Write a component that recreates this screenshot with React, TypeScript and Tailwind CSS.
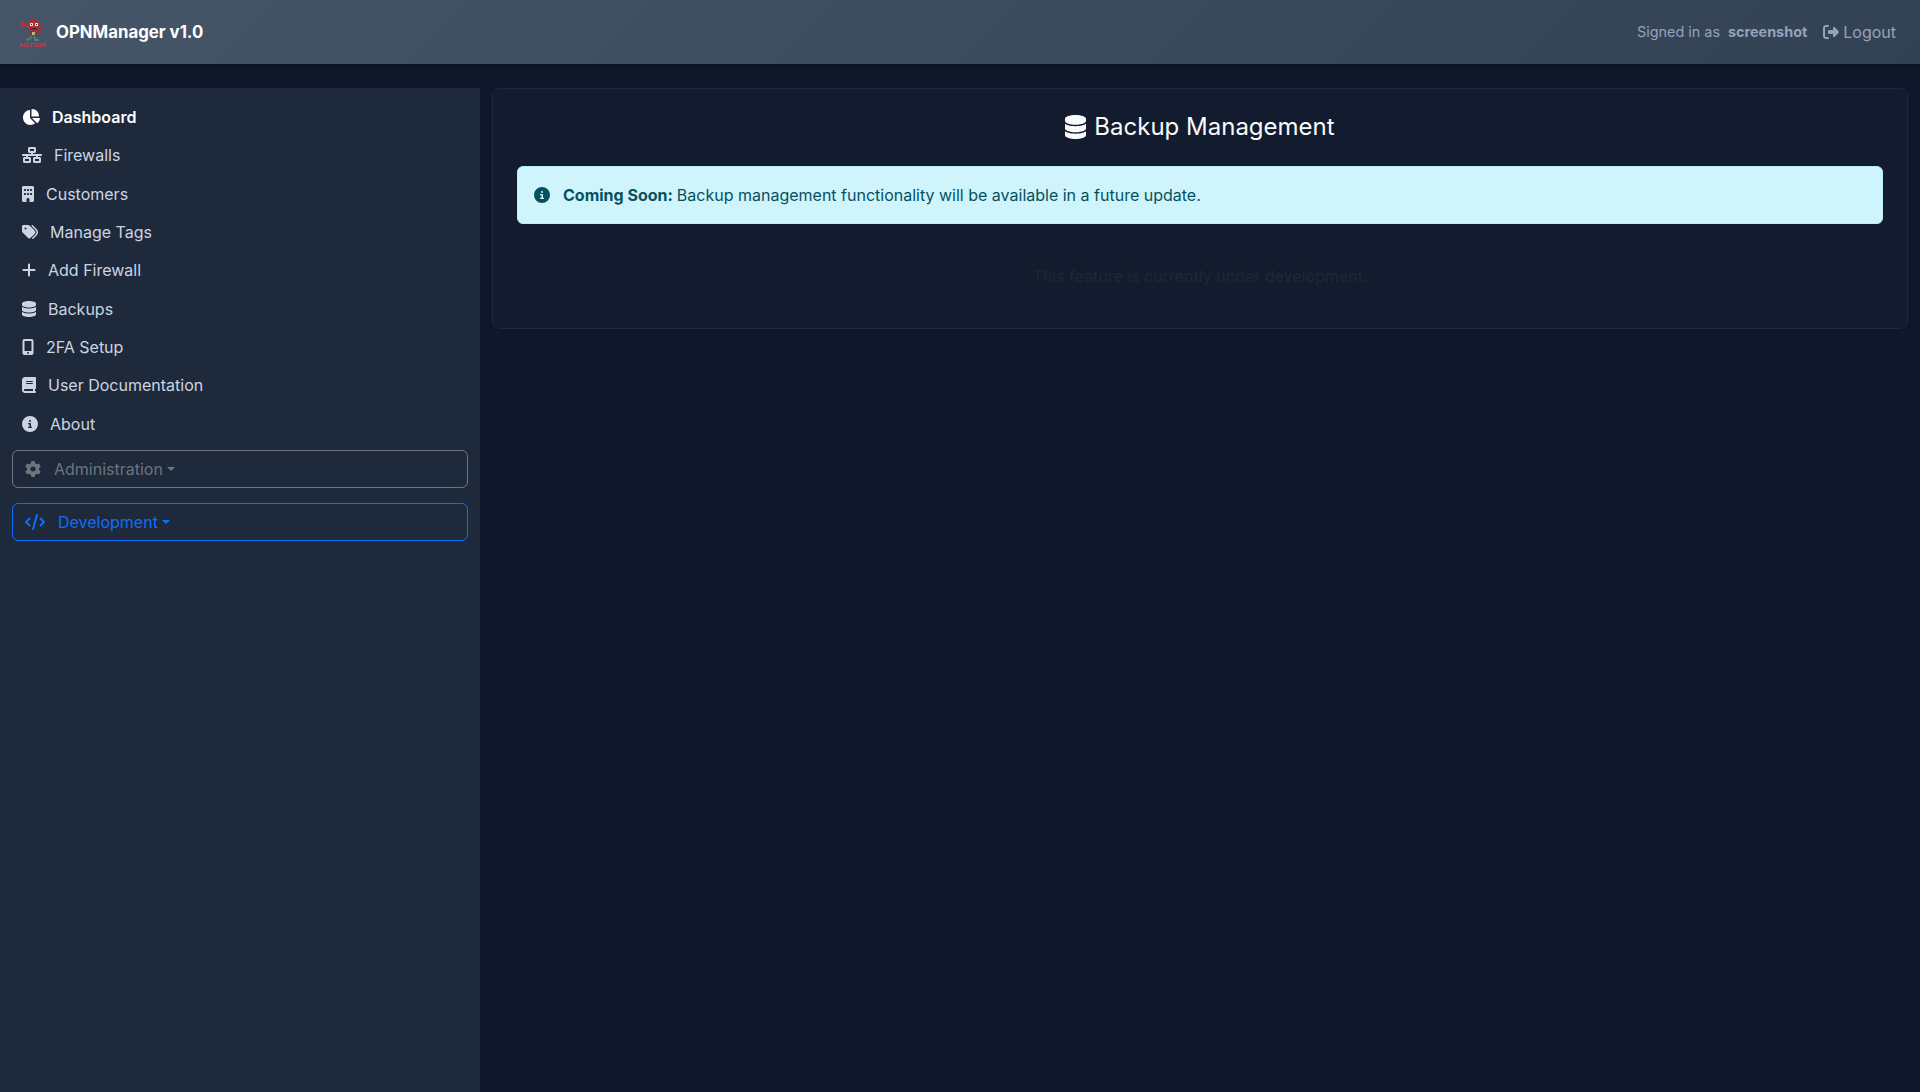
import React from "react";
import {
  FaChartPie, FaNetworkWired, FaBuilding, FaTags, FaPlus, FaDatabase, FaMobileScreenButton,
  FaBook, FaCircleInfo, FaGear, FaCode, FaRightFromBracket,
} from "react-icons/fa6";

const items = [
  { label: "Dashboard", icon: <FaChartPie className="h-[16px] w-[18px] shrink-0" />, active: true },
  { label: "Firewalls", icon: <FaNetworkWired className="h-[16px] w-[20px] shrink-0" /> },
  { label: "Customers", icon: <FaBuilding className="h-[16px] w-[12px] shrink-0" /> },
  { label: "Manage Tags", icon: <FaTags className="h-[16px] w-[16px] shrink-0" /> },
  { label: "Add Firewall", icon: <FaPlus className="h-[16px] w-[14px] shrink-0" /> },
  { label: "Backups", icon: <FaDatabase className="h-[16px] w-[14px] shrink-0" /> },
  { label: "2FA Setup", icon: <FaMobileScreenButton className="h-[16px] w-[12px] shrink-0" /> },
  { label: "User Documentation", icon: <FaBook className="h-[16px] w-[14px] shrink-0" /> },
  { label: "About", icon: <FaCircleInfo className="h-[16px] w-[16px] shrink-0" /> },
];

function Logo() {
  return (
    <div className="flex h-[32px] w-[24px] flex-col items-center">
      <svg width="24" height="26" viewBox="0 0 24 26" className="block" aria-hidden="true">
        <path d="M13 1l1 3 2-1-1 3h-4l-2-3 3 1z" fill="#b3262e" />
        <circle cx="14" cy="10" r="5.5" fill="#b82a33" />
        <path d="M9 11L3 8 1 6M3 8l-1 3" stroke="#c92a35" strokeWidth="2" fill="none" />
        <path d="M18 12l3 1 0 4" stroke="#b3262e" strokeWidth="2" fill="none" />
        <rect x="10" y="7" width="3" height="3" fill="#e0ddc8" />
        <rect x="15" y="7" width="3" height="3" fill="#e0ddc8" />
        <rect x="11" y="8" width="1" height="1" fill="#222" />
        <rect x="16" y="8" width="1" height="1" fill="#222" />
        <rect x="11" y="12" width="6" height="1.5" fill="#3a2e26" />
        <rect x="10" y="15" width="7" height="5" fill="#7d3a36" />
        <rect x="12" y="16" width="3" height="3" fill="#c9b48a" />
        <path d="M11 20l-2 2-3 1 1 2 4-2 1-3z" fill="#4d8a62" />
        <path d="M15 20l1 3 3 0 0 2-4 0-2-5z" fill="#4d8a62" />
      </svg>
      <span className="font-['Liberation_Sans',sans-serif] text-[6px] leading-[6px] font-bold whitespace-nowrap text-[#d7333f]">AGITSDR</span>
    </div>
  );
}

function Caret() {
  return <span className="ml-[4px] inline-block h-0 w-0 border-x-[4.8px] border-t-[4.8px] border-x-transparent border-t-current" />;
}

export default function App() {
  return (
    <div className="flex min-h-[1092px] flex-col bg-[#0f172a] font-['Inter',sans-serif] text-[16px] leading-6 text-[#f1f5f9]">
      <header className="flex h-[64px] items-center justify-between bg-linear-[135deg] from-[#475569] to-[#334155] pr-[24px] pl-[20px] shadow-[0_1px_3px_rgba(0,0,0,0.3)]">
        <div className="flex items-center gap-[12px]">
          <Logo />
          <span className="text-[16.8px] font-bold text-white">OPNManager v1.0</span>
        </div>
        <div className="flex items-center text-[14.4px] text-[#94a3b8]">
          <span>Signed in as</span>
          <span className="ml-[8px] font-bold">screenshot</span>
          <span className="ml-[16px] flex items-center gap-[4px] text-[16px]">
            <FaRightFromBracket className="text-[16px]" />
            Logout
          </span>
        </div>
      </header>

      <div className="mt-[24px] flex flex-1">
        <aside className="flex w-[480px] shrink-0 flex-col bg-[#1e293b] px-[12px] pt-[9.6px]">
          <nav className="flex flex-col">
            {items.map(({ label, icon, active }) => (
              <a
                key={label}
                className={`flex items-center gap-[12px] px-[10px] py-[7.2px] ${active ? "font-semibold text-white" : "text-[#cbd5e1]"}`}
              >
                {icon}
                {label}
              </a>
            ))}
          </nav>
          <button className="mt-[7px] flex h-[38px] items-center rounded-[6px] border border-[#6c757d] px-[12px] text-[#6c757d]">
            <FaGear className="mr-[13px] h-[16px] w-[16px]" />
            Administration
            <Caret />
          </button>
          <button className="mt-[15px] flex h-[38px] items-center rounded-[6px] border border-[#0d6efd] px-[12px] text-[#0d6efd]">
            <FaCode className="mr-[13px] h-[16px] w-[20px]" />
            Development
            <Caret />
          </button>
        </aside>

        <main className="flex-1 pt-0 pr-[12px] pl-[12px]">
          <section className="flex h-[241px] flex-col rounded-[8px] border border-[#1e293b] bg-[#131c2e] px-[24px] pt-[23px]">
            <h2 className="flex items-center justify-center gap-[8px] text-[24px] leading-[29px] font-normal text-[#f8fafc]">
              <FaDatabase className="h-[24px] w-[21px]" />
              Backup Management
            </h2>
            <div className="mt-[25px] flex h-[58px] items-center rounded-[6px] border border-[#b6effb] bg-[#cff4fc] px-[16px] text-[#055160]">
              <FaCircleInfo className="mr-[13px] h-[16px] w-[16px]" />
              <strong className="font-bold">Coming Soon:</strong>
              <span className="ml-[4px]">Backup management functionality will be available in a future update.</span>
            </div>
            <p className="mt-[40px] text-center text-[#212733]">This feature is currently under development.</p>
          </section>
        </main>
      </div>
    </div>
  );
}
